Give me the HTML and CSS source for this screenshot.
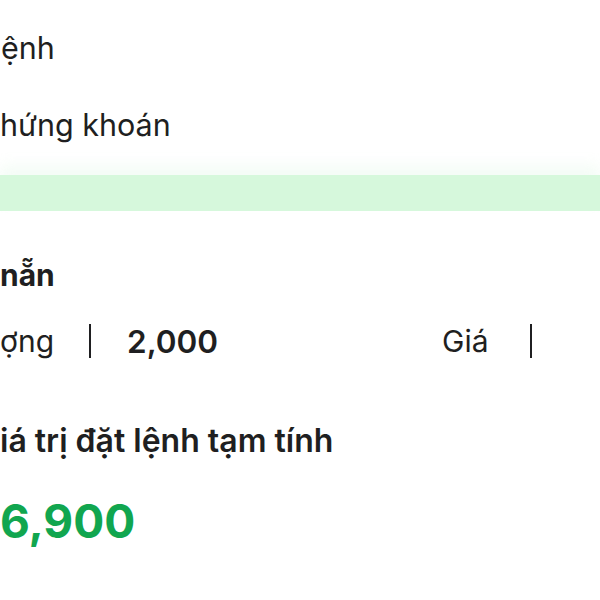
FILE: index.html
```html
<!DOCTYPE html>
<html lang="vi">
<head>
<meta charset="utf-8">
<link rel="stylesheet" href="styles.css">
</head>
<body>
<div class="screen">
  <div class="row row-type"><span class="label">ệnh</span></div>
  <div class="row row-stock"><span class="label">hứng khoán</span></div>
  <div class="band"></div>
  <div class="section-title">nẵn</div>
  <div class="inputs">
    <span class="label qty">ợng</span>
    <span class="divider"></span>
    <span class="value">2,000</span>
    <span class="label price">Giá</span>
    <span class="divider"></span>
  </div>
  <div class="total-title">iá trị đặt lệnh tạm tính</div>
  <div class="total">6,900</div>
</div>
</body>
</html>
```
FILE: styles.css
```css
html, body {
  margin: 0;
  padding: 0;
  background: #ffffff;
  overflow: hidden;
}
.screen {
  width: 600px;
  height: 600px;
  font-family: Inter, "Noto Sans", sans-serif;
  color: #1f1f21;
  display: flex;
  flex-direction: column;
}
.row {
  display: flex;
  align-items: center;
  font-size: 30.5px;
}
.row-type {
  height: 40px;
  margin-top: 27px;
  padding-left: 1px;
}
.row-stock {
  height: 40px;
  margin-top: 37px;
}
.band {
  margin-top: 31px;
  height: 36px;
  background: #d6f8dc;
  box-shadow: 0 -10px 14px rgba(230, 248, 234, 0.45);
}
.section-title {
  margin-top: 45px;
  font-size: 30px;
  font-weight: 700;
  line-height: 38px;
}
.inputs {
  margin-top: 27px;
  display: flex;
  align-items: center;
  height: 40px;
  font-size: 30px;
}
.qty {
  width: 89px;
}
.divider {
  width: 2px;
  height: 34px;
  background: #1f1f21;
}
.value {
  font-size: 31.5px;
  font-weight: 600;
  margin-left: 36px;
  width: 315px;
}
.price {
  width: 88px;
}
.total-title {
  margin-top: 61px;
  font-size: 32px;
  font-weight: 600;
  line-height: 38px;
}
.total {
  margin-top: 35px;
  font-size: 46px;
  font-weight: 700;
  color: #11a64f;
  line-height: 52px;
}
```
